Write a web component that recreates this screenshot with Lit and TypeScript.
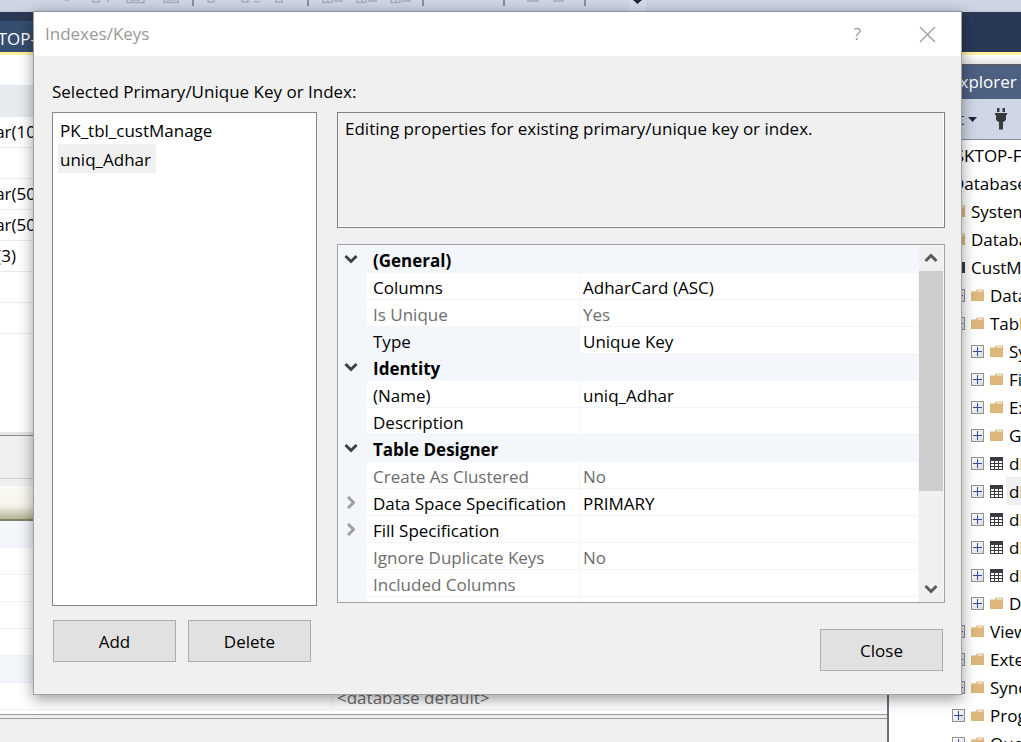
import { LitElement, html, svg, css, nothing } from "lit";
import { customElement, property, state } from "lit/decorators.js";
import { classMap } from "lit/directives/class-map.js";

type TreeIcon = "server" | "folder" | "database" | "table";

interface TreeNode {
  level: number;
  label: string;
  icon: TreeIcon;
  open?: boolean;
  active?: boolean;
}

interface PropertyRow {
  name: string;
  value?: string;
  kind?: "category" | "group";
  readonly?: boolean;
  current?: boolean;
}

const TREE: TreeNode[] = [
  { level: 0, label: "DESKTOP-F", icon: "server", open: true },
  { level: 1, label: "Databases", icon: "folder", open: true },
  { level: 2, label: "System Databases", icon: "folder" },
  { level: 2, label: "Database Snapshots", icon: "folder" },
  { level: 2, label: "CustManage", icon: "database", open: true },
  { level: 3, label: "Database Diagrams", icon: "folder" },
  { level: 3, label: "Tables", icon: "folder", open: true },
  { level: 4, label: "System Tables", icon: "folder" },
  { level: 4, label: "FileTables", icon: "folder" },
  { level: 4, label: "External Tables", icon: "folder" },
  { level: 4, label: "Graph Tables", icon: "folder" },
  { level: 4, label: "dbo", icon: "table" },
  { level: 4, label: "dbo", icon: "table", active: true },
  { level: 4, label: "dbo", icon: "table" },
  { level: 4, label: "dbo", icon: "table" },
  { level: 4, label: "dbo", icon: "table" },
  { level: 4, label: "Dropped", icon: "folder" },
  { level: 3, label: "Views", icon: "folder" },
  { level: 3, label: "External", icon: "folder" },
  { level: 3, label: "Synonyms", icon: "folder" },
  { level: 3, label: "Programmability", icon: "folder" },
  { level: 3, label: "Query Store", icon: "folder" },
];

const PROPERTIES: PropertyRow[] = [
  { name: "(General)", kind: "category" },
  { name: "Columns", value: "AdharCard (ASC)" },
  { name: "Is Unique", value: "Yes", readonly: true },
  { name: "Type", value: "Unique Key", current: true },
  { name: "Identity", kind: "category" },
  { name: "(Name)", value: "uniq_Adhar" },
  { name: "Description" },
  { name: "Table Designer", kind: "category" },
  { name: "Create As Clustered", value: "No", readonly: true },
  { name: "Data Space Specification", value: "PRIMARY", kind: "group" },
  { name: "Fill Specification", kind: "group" },
  { name: "Ignore Duplicate Keys", value: "No", readonly: true },
  { name: "Included Columns", readonly: true },
  { name: "" },
];

const chevron = (dir: "down" | "right" | "up") => {
  const d = { down: "M1.5 3 7 8.500 12.500 3", up: "M1.500 9 7 3.500 12.500 9", right: "M4 1 9.500 6.500 4 12" }[dir];
  return html`<svg width="14" height="13" viewBox="0 0 14 13" aria-hidden="true">
    <path d=${d} fill="none" stroke="currentColor" stroke-width="3" />
  </svg>`;
};

const treeIcon = (icon: TreeIcon) => {
  const body = {
    folder: svg`<path d="M0 2.500H4.500L6 0.500H13V12H0Z" fill="#dcb67a"/><path d="M6.500 2H12" stroke="#fff" stroke-width="1"/>`,
    table: svg`<path d="M0 0H13V13H0Z" fill="#3b3b3f"/><path d="M1 4h3v2H1zM5 4h3v2H5zM9 4h3v2H9zM1 7h3v2H1zM5 7h3v2H5zM9 7h3v2H9zM1 10h3v2H1zM5 10h3v2H5zM9 10h3v2H9z" fill="#fff"/>`,
    database: svg`<path d="M2 1H13V12H2Z" fill="#3b3b3f"/>`,
    server: svg`<path d="M2 1H12V12H2Z" fill="#3b3b3f"/>`,
  }[icon];
  return html`<svg width="14" height="13" viewBox="0 0 14 13" aria-hidden="true">${body}</svg>`;
};

@customElement("top-toolbar")
class TopToolbar extends LitElement {
  static styles = css`
    :host {
      display: block;
      flex: none;
      height: 12px;
      overflow: hidden;
      background: linear-gradient(#cfd6e5, #cdd3e2 9px, #c5cad6);
    }
    svg {
      display: block;
    }
  `;
  render() {
    return html`<svg width="660" height="12" viewBox="0 0 660 12" aria-hidden="true">
      <g fill="#8390a5">
        <path d="M192 0h2v6h-2zM307 0h2v6h-2zM422 0h2v6h-2zM503 0h2v6h-2zM584 0h2v6h-2z" />
      </g>
      <g fill="none" stroke="#a9acb5" stroke-width="1.500">
        <path d="M65 0h4M93 0v2h6V0M107 0l2 2M127 0v2.500h17V0M130 0h10M164 0v2.500h14V0M167 0h8M208 0v2h6V0M242 0v2h6V0M254 1q3 2 6 0M282 0v2h-6V0M323 0v2.500h9V0M328 0v2M334 1h9M357 0v2.500h9V0M362 0v2M368 1h9M391 0v2.500h9V0M396 0v2M402 1h9M527 1h12M553 1h11" />
      </g>
      <path d="M629 0h17v12h-17z" fill="#d6dbe8" />
      <path d="M633 0h9l-4.500 4z" fill="#1b293e" />
    </svg>`;
  }
}

@customElement("object-explorer")
class ObjectExplorer extends LitElement {
  static styles = css`
    :host {
      display: flex;
      flex-direction: column;
      min-width: 0;
      overflow: hidden;
      background: #fff;
      white-space: nowrap;
    }
    .lead {
      flex: none;
      height: 10px;
      background: linear-gradient(#fff, #e4e4e4);
      border-bottom: 1px solid #5c5c5c;
      box-sizing: border-box;
    }
    .title {
      flex: none;
      height: 34px;
      line-height: 34px;
      padding-left: 5px;
      background: #4d6082;
      color: #fff;
    }
    .title h2 {
      margin: 0;
      font: inherit;
      width: 121px;
      text-align: right;
    }
    .bar {
      flex: none;
      display: flex;
      align-items: center;
      height: 41px;
      box-sizing: border-box;
      border-bottom: 1px solid #868c99;
      background: #cfd6e5;
    }
    .connect {
      display: flex;
      align-items: center;
      justify-content: flex-end;
      gap: 4px;
      width: 88px;
      padding: 0;
      border: 0;
      background: none;
      font: inherit;
      color: #1b293e;
    }
    .plug {
      margin-left: 18px;
      padding: 0;
      border: 0;
      background: none;
      height: 22px;
    }
    svg {
      display: block;
      flex: none;
    }
    ul {
      margin: 0;
      padding: 1px 0 0 6px;
      list-style: none;
    }
    li {
      display: flex;
      align-items: center;
      gap: 6px;
      height: 28px;
    }
    .box {
      flex: none;
      width: 13px;
      height: 13px;
      box-sizing: border-box;
      border: 1px solid #919191;
      background: linear-gradient(135deg, #fff, #dcdce0);
      display: grid;
      place-items: center;
    }
    .name {
      line-height: 26px;
      padding-top: 2px;
      margin-left: -1px;
    }
    .active .name {
      background: #efefef;
      padding-left: 3px;
      margin-left: -4px;
      flex: 1;
    }
  `;
  render() {
    return html`
      <div class="lead"></div>
      <div class="title"><h2>Object Explorer</h2></div>
      <div class="bar">
        <button class="connect">Connect
          <svg width="9" height="5" viewBox="0 0 9 5"><path d="M0 0h9L4.500 5z" fill="#1b293e" /></svg>
        </button>
        <button class="plug" aria-label="Connect object explorer">
          <svg width="12" height="22" viewBox="0 0 12 22">
            <path d="M2 0h2.500v4H2zM7.500 0H10v4H7.500zM0 5h12v2h-1v5L8.500 14H8v7.500H4V14h-.500L1 12V7H0z" fill="#3a3a3d" />
          </svg>
        </button>
      </div>
      <ul>
        ${TREE.map(
          (n) => html`<li class=${classMap({ active: !!n.active })} style="padding-left:${n.level * 19}px">
            <span class="box">
              <svg width="9" height="9" viewBox="0 0 9 9">
                <path d=${n.open ? "M0 4.500h9" : "M0 4.500h9M4.500 0v9"} stroke="#2f4f9e" stroke-width="1" />
              </svg>
            </span>
            ${treeIcon(n.icon)}
            <span class="name">${n.label}</span>
          </li>`
        )}
      </ul>
    `;
  }
}

@customElement("table-designer")
class TableDesigner extends LitElement {
  static styles = css`
    :host {
      display: flex;
      flex-direction: column;
      overflow: hidden;
      background: #fff;
      white-space: nowrap;
    }
    .head {
      flex: none;
      height: 32px;
      margin-top: 30px;
      background: #e6ebf0;
    }
    .cols {
      flex: none;
      height: 315px;
    }
    .col {
      display: flex;
      box-sizing: border-box;
      height: 31px;
      line-height: 30px;
      border-bottom: 1px solid #ebebeb;
    }
    .type {
      display: flex;
      justify-content: flex-end;
      width: 36px;
    }
    .type.short {
      width: 16px;
    }
    .split {
      flex: none;
      height: 44px;
      box-sizing: border-box;
      margin-top: 3px;
      border-top: 1px solid #8c8c8c;
      border-bottom: 1px solid #d2d2d2;
      background: #efefef;
      box-shadow: 0 -3px #e6e6e6;
    }
    .tabs {
      flex: none;
      height: 42px;
      box-sizing: border-box;
      border-top: 7px solid #efefef;
      border-bottom: 2px solid #7f8267;
      background: linear-gradient(#fbfbf5, #f6f3ec 60%, #b3b391);
    }
    .prop {
      flex: none;
      display: flex;
      justify-content: flex-start;
      height: 27px;
      box-sizing: border-box;
      border-bottom: 1px solid #f0f2f9;
      line-height: 30px;
      color: #6d6d6d;
    }
    .prop.band {
      background: #f3f7fc;
    }
    .prop span {
      margin-left: 331px;
      padding-left: 5px;
      border-left: 1px solid #f0f2f9;
    }
    .foot {
      flex: 1;
      margin-top: 4px;
      border-top: 1px solid #9a9a9a;
      background: #efefef;
    }
    .foot div {
      margin-top: 3px;
      border-top: 1px solid #9a9a9a;
    }
  `;
  render() {
    const types = ["nvarchar(10", "", "nvarchar(50", "nvarchar(50", "int(3)", "", ""];
    return html`
      <div class="head"></div>
      <div class="cols">
        ${types.map((t) => html`<div class="col"><span class=${classMap({ type: true, short: t === "int(3)" })}>${t}</span></div>`)}
      </div>
      <div class="split"></div>
      <div class="tabs"></div>
      ${["b", "", "", "", "", "b", "t"].map(
        (k) => html`<div class=${classMap({ prop: true, band: k === "b" })}>
          ${k === "t" ? html`<span>&lt;database default&gt;</span>` : nothing}
        </div>`
      )}
      <div class="foot"><div></div></div>
    `;
  }
}

@customElement("property-grid")
class PropertyGrid extends LitElement {
  @property({ attribute: false }) rows: PropertyRow[] = [];

  static styles = css`
    :host {
      display: flex;
      box-sizing: border-box;
      height: 359px;
      padding: 1px 1px 0 0;
      overflow: hidden;
      border: 1px solid #a0a0a0;
      background: #f3f7fc;
    }
    table {
      flex: 1;
      align-self: flex-start;
      border-collapse: separate;
      border-spacing: 0;
      table-layout: fixed;
      width: 0;
      background: #fff;
    }
    .c-margin {
      width: 29px;
    }
    .c-name {
      width: 213px;
    }
    th,
    td {
      box-sizing: border-box;
      height: 27px;
      padding: 4px 0 0 6px;
      text-align: left;
      font-weight: 400;
      line-height: 22px;
      border-bottom: 1px solid #f1f4f9;
      white-space: nowrap;
    }
    td.margin {
      padding-top: 0;
    }
    td.margin,
    .category th,
    .current th {
      background: #f3f7fc;
      border-bottom-color: #f3f7fc;
    }
    th {
      border-right: 1px solid #f1f4f9;
    }
    td.value {
      padding-left: 3px;
    }
    .category th {
      font-weight: 700;
      border-right: 0;
    }
    .readonly {
      color: #6d6d6d;
    }
    button {
      display: block;
      padding: 0;
      border: 0;
      background: none;
      color: #404040;
    }
    .group button {
      color: #a0a0a0;
    }
    svg {
      display: block;
    }
    .scroll {
      flex: none;
      display: flex;
      flex-direction: column;
      width: 24px;
      margin: 0 0 0 1px;
      background: #f0f0f0;
    }
    .scroll button {
      flex: none;
      display: grid;
      place-items: center;
      height: 25px;
      color: #5a5a5a;
    }
    .thumb {
      height: 220px;
      background: #cdcdcd;
    }
    .track {
      flex: 1;
    }
  `;

  render() {
    return html`
      <table aria-label="Properties">
        <colgroup><col class="c-margin" /><col class="c-name" /><col /></colgroup>
        <tbody>
          ${this.rows.map((r) => {
            const cls = classMap({
              category: r.kind === "category",
              group: r.kind === "group",
              readonly: !!r.readonly,
              current: !!r.current,
            });
            const cat = r.kind === "category";
            return html`<tr class=${cls}>
              <td class="margin">
                ${r.kind ? html`<button aria-label="Toggle ${r.name}">${chevron(cat ? "down" : "right")}</button>` : nothing}
              </td>
              <th scope="row" colspan=${cat ? 2 : 1}>${r.name}</th>
              ${cat ? nothing : html`<td class="value">${r.value ?? ""}</td>`}
            </tr>`;
          })}
        </tbody>
      </table>
      <div class="scroll">
        <button aria-label="Scroll up">${chevron("up")}</button>
        <div class="thumb"></div>
        <div class="track"></div>
        <button aria-label="Scroll down">${chevron("down")}</button>
      </div>
    `;
  }
}

@customElement("index-dialog")
class IndexDialog extends LitElement {
  @state() private selected = "uniq_Adhar";

  static styles = css`
    :host {
      display: block;
      box-sizing: border-box;
      border: 1px solid #a0a0a0;
      border-top-color: #8f949e;
      background: #f0f0f0;
      box-shadow: 0 4px 14px rgba(0, 0, 0, 0.4);
    }
    header {
      display: flex;
      align-items: center;
      height: 44px;
      padding: 0 25px 0 11px;
      background: #fff;
      color: #999;
    }
    h1 {
      flex: 1;
      margin: 0;
      font: inherit;
    }
    header button {
      padding: 0;
      border: 0;
      background: none;
      font: inherit;
      color: inherit;
    }
    header svg {
      display: block;
    }
    .help {
      margin-right: 58px;
    }
    .body {
      display: grid;
      grid-template-columns: 265px minmax(0, 1fr);
      column-gap: 20px;
      padding: 22px 16px 23px 18px;
    }
    label {
      grid-column: 1 / -1;
      height: 34px;
      line-height: 28px;
    }
    select {
      appearance: none;
      box-sizing: border-box;
      width: 100%;
      height: 100%;
      margin: 0;
      padding: 2px 5px;
      border: 1px solid #828790;
      border-radius: 0;
      outline: 0;
      background: #fff;
      font: inherit;
      color: #000;
      overflow: hidden;
    }
    option {
      display: block;
      width: fit-content;
      box-sizing: border-box;
      height: 29px;
      line-height: 24px;
      min-height: 0;
      padding: 4px 5px 0 2px;
      color: #000;
    }
    option:checked {
      background: linear-gradient(#f0f0f0, #f0f0f0);
    }
    .right {
      padding-bottom: 3px;
    }
    .note {
      box-sizing: border-box;
      height: 116px;
      margin: 0 0 16px;
      padding: 4px 7px;
      border: 1px solid #828282;
      box-shadow: inset -1px -1px #fff;
      line-height: 24px;
    }
    footer {
      grid-column: 1 / -1;
      display: flex;
      align-items: flex-start;
      gap: 12px;
      padding: 14px 2px 0 1px;
    }
    footer button {
      width: 123px;
      height: 42px;
      padding: 1px 0 0;
      border: 1px solid #adadad;
      background: #e1e1e1;
      font: inherit;
      color: #000;
    }
    .close {
      margin: 9px 0 0 auto;
    }
  `;

  render() {
    return html`
      <header>
        <h1>Indexes/Keys</h1>
        <button class="help" aria-label="Help">?</button>
        <button aria-label="Close dialog">
          <svg width="17" height="17" viewBox="0 0 17 17">
            <path d="M1 1 16 16M16 1 1 16" stroke="#999" stroke-width="1.200" />
          </svg>
        </button>
      </header>
      <div class="body">
        <label for="keys">Selected Primary/Unique Key or Index:</label>
        <select id="keys" size="10" @change=${(e: Event) => (this.selected = (e.target as HTMLSelectElement).value)}>
          ${["PK_tbl_custManage", "uniq_Adhar"].map((k) => html`<option ?selected=${k === this.selected}>${k}</option>`)}
        </select>
        <div class="right">
          <p class="note">Editing properties for existing primary/unique key or index.</p>
          <property-grid .rows=${PROPERTIES}></property-grid>
        </div>
        <footer>
          <button>Add</button>
          <button>Delete</button>
          <button class="close">Close</button>
        </footer>
      </div>
    `;
  }
}

@customElement("app-root")
class AppRoot extends LitElement {
  static styles = css`
    :host {
      display: flex;
      flex-direction: column;
      position: relative;
      height: 100vh;
      overflow: hidden;
      background: #fff;
      font: 17px/24px "Segoe UI", "Open Sans", "Noto Sans", sans-serif;
      color: #000;
    }
    .tabstrip {
      flex: none;
      height: 43px;
      box-sizing: border-box;
      padding-top: 9px;
      border-bottom: 3px solid #fff29d;
      background: #293955;
      overflow: hidden;
    }
    .tab {
      width: 300px;
      height: 31px;
      line-height: 36px;
      background: #364e6f;
      color: #fff;
    }
    .tab span {
      display: flex;
      justify-content: flex-end;
      width: 36px;
    }
    .work {
      flex: 1;
      min-height: 0;
      display: grid;
      grid-template-columns: minmax(0, 1fr) 132px;
      column-gap: 2px;
      background: #6b6f7a;
    }
    index-dialog {
      position: absolute;
      top: 11px;
      left: 33px;
      right: 59px;
    }
  `;
  render() {
    return html`
      <top-toolbar></top-toolbar>
      <div class="tabstrip"><div class="tab"><span>DESKTOP-</span></div></div>
      <div class="work">
        <table-designer></table-designer>
        <object-explorer></object-explorer>
      </div>
      <index-dialog role="dialog" aria-label="Indexes/Keys"></index-dialog>
    `;
  }
}
